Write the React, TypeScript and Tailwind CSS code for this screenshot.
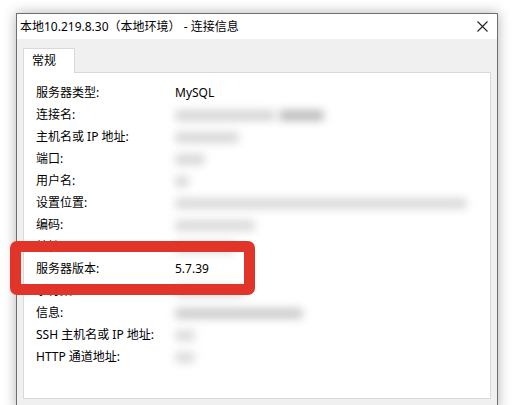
import React from 'react';

type Row = { label: string; value?: string; blobs?: [number, number, string][] };

// blobs: [width, gap-before, colour] — stand-ins for the blurred-out values
const rows: Row[] = [
  { label: '服务器类型:', value: 'MySQL' },
  { label: '连接名:', blobs: [[100, 0, '#d6d6d6'], [45, 4, '#bdbdbd']] },
  { label: '主机名或 IP 地址:', blobs: [[64, 0, '#d8d8d8']] },
  { label: '端口:', blobs: [[30, 0, '#d8d8d8']] },
  { label: '用户名:', blobs: [[14, 0, '#d8d8d8']] },
  { label: '设置位置:', blobs: [[292, 0, '#dadada']] },
  { label: '编码:', blobs: [[80, 0, '#dadada']] },
  { label: '特性:', blobs: [[60, 0, '#dadada']] },
  { label: '服务器版本:', value: '5.7.39' },
  { label: '字符集:', blobs: [[70, 0, '#dadada']] },
  { label: '信息:', blobs: [[128, 0, '#cdcdcd']] },
  { label: 'SSH 主机名或 IP 地址:', blobs: [[20, 0, '#dcdcdc']] },
  { label: 'HTTP 通道地址:', blobs: [[20, 0, '#dcdcdc']] },
];

export default function App() {
  return (
    <div
      className="relative w-[516px] h-[405px] overflow-hidden bg-white text-[12px] text-black"
      style={{ fontFamily: '"Noto Sans", "Noto Sans CJK SC", sans-serif' }}
    >
      {/* dialog window */}
      <div className="ml-[16px] mt-[13px] w-[482px] border border-[#6e6e6e] bg-[#f0f0f0] shadow-[0_0_12px_rgba(0,0,0,0.3)]">
        <div className="h-[25px] bg-white flex items-center justify-between pl-[3px] pr-[9px]">
          <span className="leading-none">本地10.219.8.30（本地环境） - 连接信息</span>
          <svg width="11" height="11" viewBox="0 0 11 11" className="text-[#222]">
            <path d="M0.5 0.5 L10.5 10.5 M10.5 0.5 L0.5 10.5" stroke="currentColor" strokeWidth="1.1" fill="none" />
          </svg>
        </div>

        <div className="px-[6px] pt-[9px] pb-[10px]">
          <div className="flex">
            <div className="h-[25px] w-[52px] bg-white border border-b-0 border-[#d9d9d9] flex items-center pl-[8px] -mb-px relative z-10">
              常规
            </div>
          </div>
          <div className="h-[327px] bg-white border border-[#d9d9d9] pt-[9px] pl-[12px]">
            {rows.map(r => (
              <div key={r.label} className="h-[22px] flex items-center">
                <div className="w-[139px] shrink-0 whitespace-nowrap">{r.label}</div>
                {r.value && <div>{r.value}</div>}
                {r.blobs && (
                  <div className="flex items-center">
                    {r.blobs.map(([w, g, c], i) => (
                      <div
                        key={i}
                        className="h-[11px] rounded blur-[4px]"
                        style={{ width: w, marginLeft: g, background: c }}
                      />
                    ))}
                  </div>
                )}
              </div>
            ))}
          </div>
        </div>
      </div>

      {/* red highlight */}
      <div className="absolute left-[10px] top-[241px] w-[245px] h-[54px] border-[11px] border-[#e2352a] rounded-[7px]" />
    </div>
  );
}
